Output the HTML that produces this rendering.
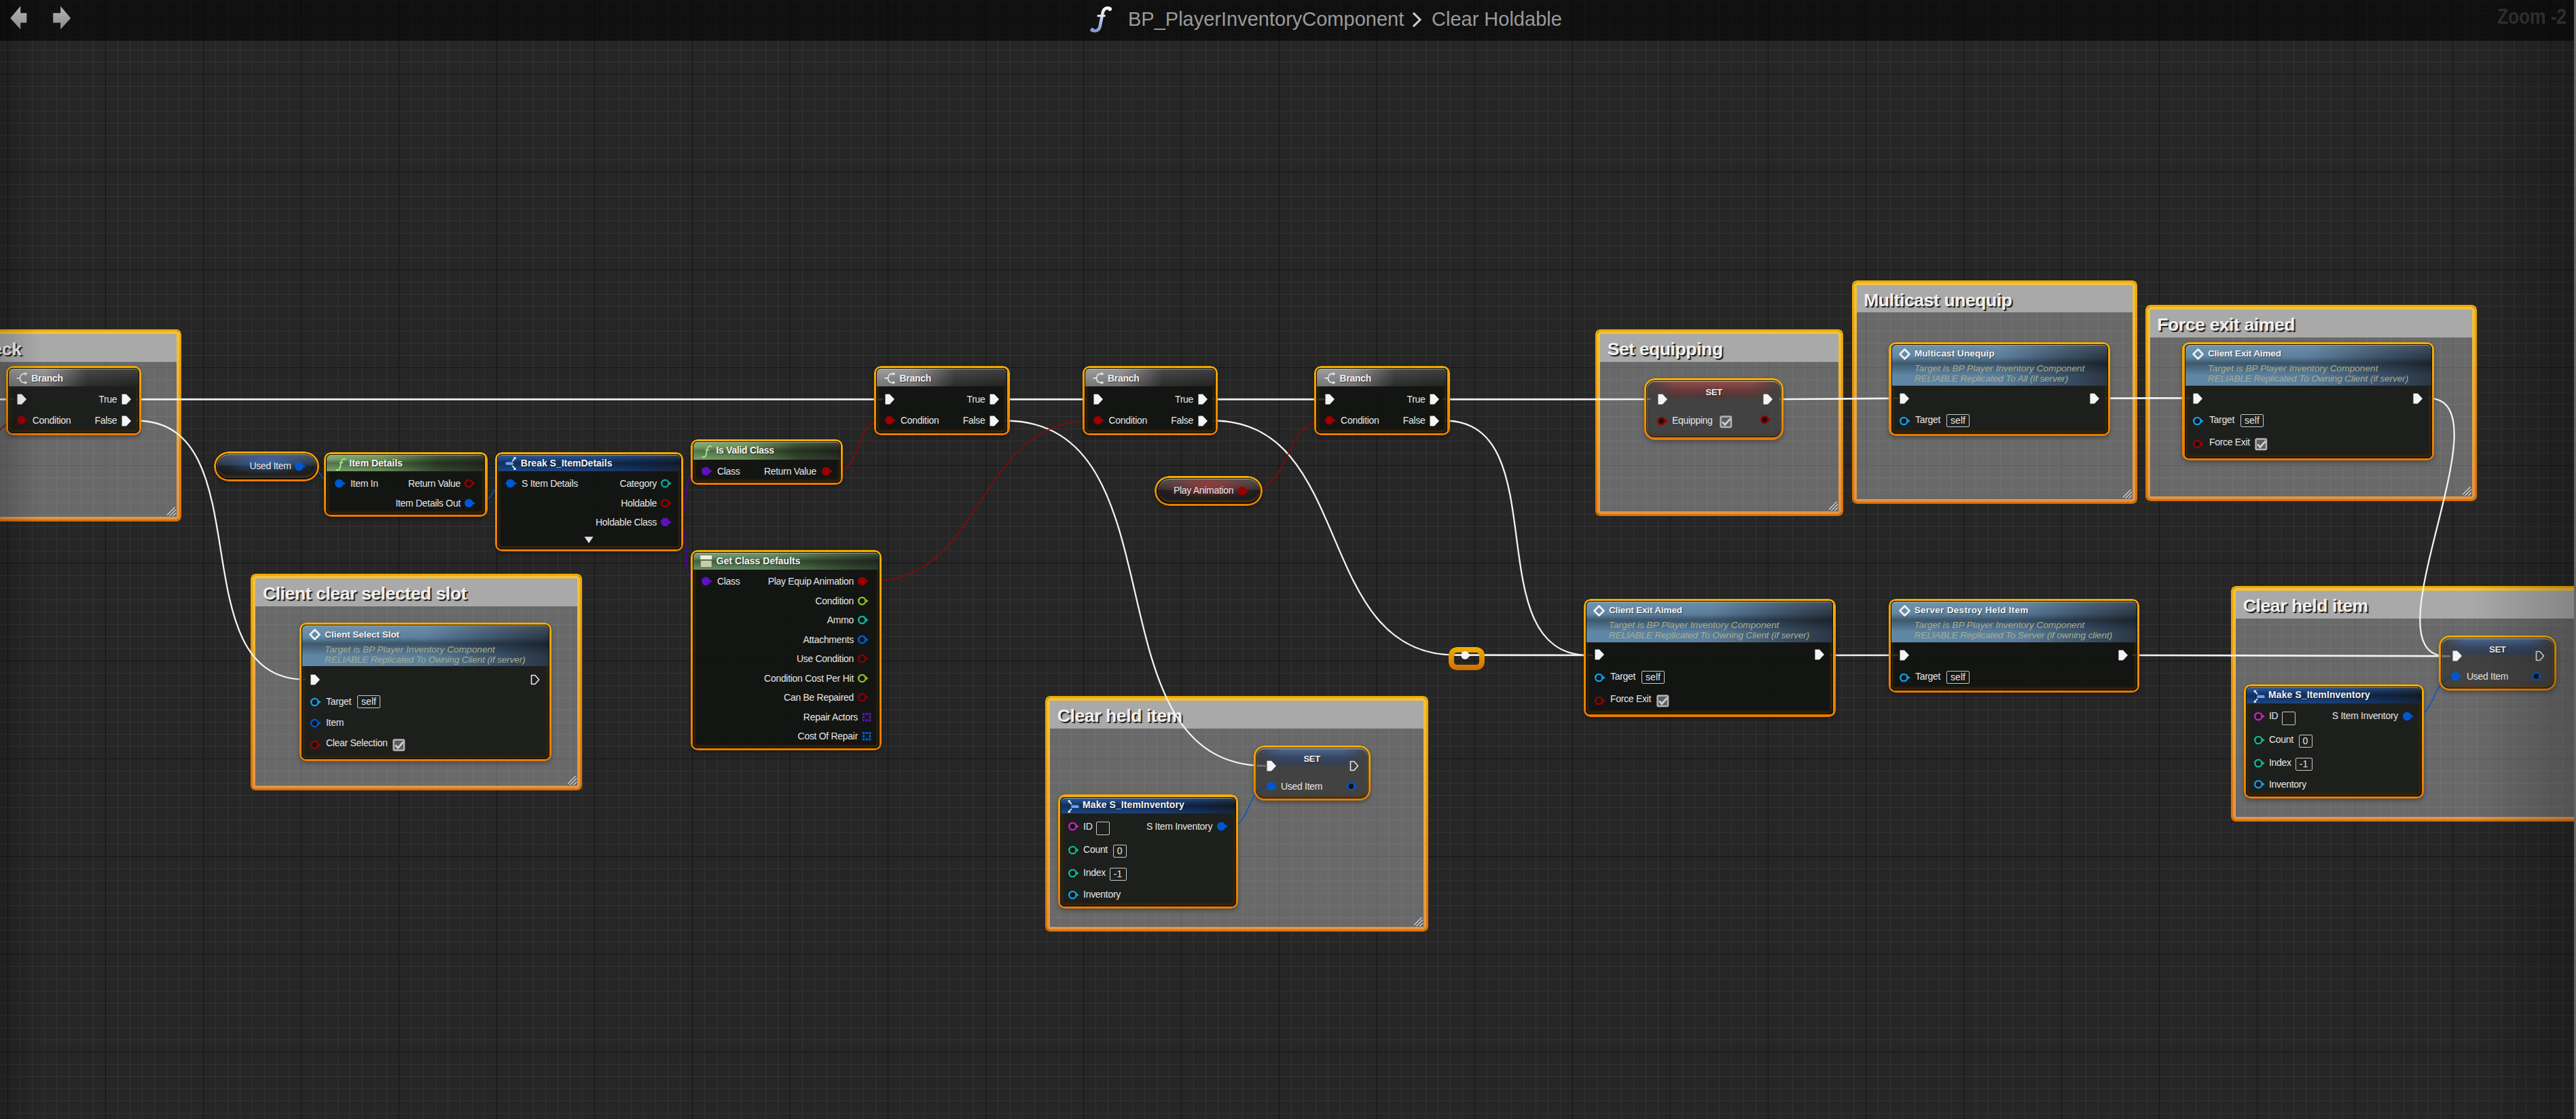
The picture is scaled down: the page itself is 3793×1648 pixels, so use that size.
<!DOCTYPE html><html><head><meta charset="utf-8"><style>
html,body{margin:0;padding:0;width:3793px;height:1648px;overflow:hidden;background:#262626;font-family:"Liberation Sans",sans-serif;position:relative}
#g{position:absolute;left:0;top:0;width:3793px;height:1648px;
 background-image:linear-gradient(to right,#161616 1px,transparent 1px),linear-gradient(to bottom,#161616 1px,transparent 1px),linear-gradient(to right,#333 1px,transparent 1px),linear-gradient(to bottom,#333 1px,transparent 1px);
 background-size:144px 144px,144px 144px,18px 18px,18px 18px;
 background-position:11px 0,0 109px,11px 0,0 1px;}
.ab{position:absolute;overflow:visible}
.tx{position:absolute;white-space:pre;font-family:"Liberation Sans",sans-serif;letter-spacing:-0.3px}
.fic{font-family:"Liberation Serif",serif;font-style:italic;font-size:22px;line-height:22px;color:#8fe08f;font-weight:700}
#top{position:absolute;left:0;top:0;width:3793px;height:60px;background:rgba(0,0,0,0.58)}
.cm{position:absolute;box-sizing:border-box;}
.cm .fr2{position:absolute;inset:3px;border-radius:4px;padding:4px;background:linear-gradient(#f2c23c,#e09448);-webkit-mask:linear-gradient(#000 0 0) content-box,linear-gradient(#000 0 0);-webkit-mask-composite:xor;mask-composite:exclude}
.cm .fr{position:absolute;inset:0;border-radius:7px;padding:3.2px;background:linear-gradient(#f0aa00,#dc7000);-webkit-mask:linear-gradient(#000 0 0) content-box,linear-gradient(#000 0 0);-webkit-mask-composite:xor;mask-composite:exclude}
.cm .ct{position:absolute;left:7px;right:7px;top:7px;height:40.5px;background:#a9a9a9}
.cm .cb{position:absolute;left:7px;right:7px;top:47.5px;bottom:7px;background:rgba(255,255,255,0.31)}
.nd{position:absolute;box-sizing:border-box;border-radius:10px;box-shadow:0 3px 6px rgba(0,0,0,.3)}
.nd::before{content:'';position:absolute;inset:0;border-radius:10px;padding:3.2px;background:linear-gradient(#f5ae00,#e87a00);-webkit-mask:linear-gradient(#000 0 0) content-box,linear-gradient(#000 0 0);-webkit-mask-composite:xor;mask-composite:exclude}
.nd .bd{position:absolute;left:3.2px;right:3.2px;top:3.2px;bottom:3.2px;border-radius:7px;background:rgba(17,19,17,0.85);overflow:hidden;box-shadow:inset 0 0 0 1px rgba(0,0,0,.75), inset 0 0 0 4.5px rgba(62,42,8,.5), inset 0 -6px 3px rgba(50,32,4,.45)}
.nd .hd{position:absolute;left:1px;right:1px;top:1px;border-radius:6px 6px 0 0}
.nd .bd::after{content:'';position:absolute;left:1px;right:1px;top:1px;height:10px;border-radius:6px 6px 0 0;box-sizing:border-box;border-top:1.2px solid rgba(215,205,165,.55);pointer-events:none}
.setn .sbd::after{border-radius:12px 12px 0 0;height:14px}
.hbr{background:linear-gradient(rgba(255,255,255,.1),rgba(0,0,0,.2)),linear-gradient(to right,#949494 0%,#8c8c8c 28%,#5e5e5e 45%,#363636 60%,#2a2a2a 100%)}
.hfn{background:linear-gradient(rgba(255,255,255,.12),rgba(0,0,0,.0) 30%,rgba(0,0,0,.35) 45%,rgba(0,0,0,0) 75%),linear-gradient(to right,#6088a6 0%,#5a7e9c 50%,#3a5066 80%,#2a3644 100%)}
.hgr{background:linear-gradient(rgba(255,255,255,.12),rgba(0,0,0,0) 25%,rgba(0,0,0,.3) 50%,rgba(0,0,0,0) 100%),linear-gradient(to right,#7aa46a 0%,#6a9058 35%,#364a30 70%,#2a3228 100%)}
.hst{background:linear-gradient(rgba(255,255,255,.12),rgba(0,0,0,0) 25%,rgba(0,0,0,.35) 50%,rgba(0,0,0,0) 100%),linear-gradient(to right,#1c4888 0%,#1a4280 50%,#16325c 80%,#1a2838 100%)}
.hgcd{background:linear-gradient(rgba(255,255,255,.15),rgba(0,0,0,0) 25%,rgba(0,0,0,.35) 50%,rgba(0,0,0,0) 100%),linear-gradient(to right,#6a9468 0%,#5e865c 40%,#3c5438 75%,#2c3a2a 100%)}
.setn,.setn::before{border-radius:16px}
.setn .sbd{background:rgba(40,40,40,0.6);border-radius:13px;box-shadow:inset 0 0 0 1px rgba(0,0,0,.8), inset 0 1px 0 1.5px rgba(200,190,150,.5), inset 0 -4px 4px rgba(90,55,0,.5)}
.hset{height:29px;border-radius:0!important;-webkit-mask:linear-gradient(to right,transparent,#000 22%,#000 78%,transparent);background:linear-gradient(rgba(90,140,210,.55),rgba(40,80,150,.45) 45%,rgba(30,60,110,.35) 75%,rgba(30,60,110,0)),linear-gradient(to right,rgba(0,0,0,0),rgba(0,0,0,0))}
.hsetr{height:29px;border-radius:0!important;-webkit-mask:linear-gradient(to right,transparent,#000 22%,#000 78%,transparent);background:linear-gradient(rgba(200,90,90,.6),rgba(150,50,50,.5) 45%,rgba(110,40,40,.35) 75%,rgba(110,40,40,0))}
.var{position:absolute;box-sizing:border-box;border-radius:22px;box-shadow:0 3px 6px rgba(0,0,0,.3)}
.var::before{content:'';position:absolute;inset:0;border-radius:22px;padding:3.2px;background:linear-gradient(#f5ae00,#e87a00);-webkit-mask:linear-gradient(#000 0 0) content-box,linear-gradient(#000 0 0);-webkit-mask-composite:xor;mask-composite:exclude}
.var .vi{position:absolute;left:3.2px;right:3.2px;top:3.2px;bottom:3.2px;border-radius:19px;background:#0a0a0a}
.var .vb{position:absolute;left:4.4px;right:4.4px;top:4.4px;bottom:4.4px;border-radius:18px;box-shadow:inset 0 1px 0 rgba(210,195,150,.8), inset 0 -3px 3px rgba(120,70,0,.5)}
.vblue .vb{background:radial-gradient(ellipse 60% 65% at 50% 30%,rgba(60,110,190,.8),rgba(60,110,190,.08) 80%,rgba(60,110,190,0) 100%),linear-gradient(#505560,#2a2e34 45%,#1a1c1c 50%,#1c1e1e)}
.vred .vb{background:radial-gradient(ellipse 60% 65% at 50% 30%,rgba(170,60,60,.8),rgba(170,60,60,.05) 80%,rgba(170,60,60,0) 100%),linear-gradient(#555,#2e2e2e 45%,#1c1c1c 50%,#1c1e1c)}
.rr{position:absolute;box-sizing:border-box;border-radius:12px;padding:7.8px;background:linear-gradient(#f2b000,#d06c00);-webkit-mask:linear-gradient(#000 0 0) content-box,linear-gradient(#000 0 0);-webkit-mask-composite:xor;mask-composite:exclude}
.tb{position:absolute;box-sizing:border-box;border:1.5px solid #c8c8c8;border-radius:2px;color:#e6e6e6;font-size:14px;text-align:center;font-family:"Liberation Sans",sans-serif}
.cm .rz{position:absolute;right:8px;bottom:8px;width:13px;height:13px;background:linear-gradient(135deg,transparent 40%,#c8c8c8 40%,#c8c8c8 47%,transparent 47%,transparent 60%,#c8c8c8 60%,#c8c8c8 67%,transparent 67%,transparent 80%,#c8c8c8 80%,#c8c8c8 87%,transparent 87%)}

</style></head><body><div id="g"></div>
<div class="cm" style="left:-60.0px;top:485.0px;width:326.5px;height:283.0px"><div class="fr"></div><div class="fr2"></div><div class="ct"></div><div class="cb"></div><div class="rz"></div></div>
<div class="tx" style="left:31.5px;top:501.1px;font-size:26.5px;line-height:26.5px;font-weight:700;color:#f0f0f0;transform:translateX(-100%);letter-spacing:-0.4px;text-shadow:2px 2px 1px rgba(0,0,0,0.85);">Validity check</div>
<div class="cm" style="left:369.4px;top:845.0px;width:487.8px;height:318.5px"><div class="fr"></div><div class="fr2"></div><div class="ct"></div><div class="cb"></div><div class="rz"></div></div>
<div class="tx" style="left:386.9px;top:861.1px;font-size:26.5px;line-height:26.5px;font-weight:700;color:#f0f0f0;letter-spacing:-0.4px;text-shadow:2px 2px 1px rgba(0,0,0,0.85);">Client clear selected slot</div>
<div class="cm" style="left:1539.3px;top:1025.0px;width:563.5px;height:347.1px"><div class="fr"></div><div class="fr2"></div><div class="ct"></div><div class="cb"></div><div class="rz"></div></div>
<div class="tx" style="left:1556.8px;top:1041.1px;font-size:26.5px;line-height:26.5px;font-weight:700;color:#f0f0f0;letter-spacing:-0.4px;text-shadow:2px 2px 1px rgba(0,0,0,0.85);">Clear held item</div>
<div class="cm" style="left:2349.2px;top:485.3px;width:365.3px;height:274.4px"><div class="fr"></div><div class="fr2"></div><div class="ct"></div><div class="cb"></div><div class="rz"></div></div>
<div class="tx" style="left:2366.7px;top:501.4px;font-size:26.5px;line-height:26.5px;font-weight:700;color:#f0f0f0;letter-spacing:-0.4px;text-shadow:2px 2px 1px rgba(0,0,0,0.85);">Set equipping</div>
<div class="cm" style="left:2726.7px;top:412.9px;width:420.1px;height:329.6px"><div class="fr"></div><div class="fr2"></div><div class="ct"></div><div class="cb"></div><div class="rz"></div></div>
<div class="tx" style="left:2744.2px;top:429.0px;font-size:26.5px;line-height:26.5px;font-weight:700;color:#f0f0f0;letter-spacing:-0.4px;text-shadow:2px 2px 1px rgba(0,0,0,0.85);">Multicast unequip</div>
<div class="cm" style="left:3158.8px;top:449.2px;width:488.2px;height:289.1px"><div class="fr"></div><div class="fr2"></div><div class="ct"></div><div class="cb"></div><div class="rz"></div></div>
<div class="tx" style="left:3176.3px;top:465.3px;font-size:26.5px;line-height:26.5px;font-weight:700;color:#f0f0f0;letter-spacing:-0.4px;text-shadow:2px 2px 1px rgba(0,0,0,0.85);">Force exit aimed</div>
<div class="cm" style="left:3285.3px;top:863.1px;width:614.7px;height:347.0px"><div class="fr"></div><div class="fr2"></div><div class="ct"></div><div class="cb"></div><div class="rz"></div></div>
<div class="tx" style="left:3302.8px;top:879.2px;font-size:26.5px;line-height:26.5px;font-weight:700;color:#f0f0f0;letter-spacing:-0.4px;text-shadow:2px 2px 1px rgba(0,0,0,0.85);">Clear held item</div>
<svg class="ab" style="left:0;top:0" width="3793" height="1648" viewBox="0 0 3793 1648"><path d="M-10.0 588.2 C-1.0 588.2 11.0 588.2 20.0 588.2" stroke="#f2f2f2" stroke-width="2.7" fill="none"/><path d="M200.0 588.2 C500.0 588.2 1000.0 588.2 1300.0 588.2" stroke="#f2f2f2" stroke-width="2.7" fill="none"/><path d="M200.0 619.5 C389.4 619.5 260.6 1000.7 450.0 1000.7" stroke="#f2f2f2" stroke-width="2.3" fill="none"/><path d="M1480.0 588.2 C1516.0 588.2 1564.0 588.2 1600.0 588.2" stroke="#f2f2f2" stroke-width="2.7" fill="none"/><path d="M1479.0 619.5 C1747.0 619.5 1596.0 1128.0 1864.0 1128.0" stroke="#f2f2f2" stroke-width="2.3" fill="none"/><path d="M1785.0 588.2 C1834.5 588.2 1900.5 588.2 1950.0 588.2" stroke="#f2f2f2" stroke-width="2.7" fill="none"/><path d="M1785.5 619.5 C1996.3 619.5 1932.2 964.7 2143.0 964.7" stroke="#f2f2f2" stroke-width="2.3" fill="none"/><path d="M2125.0 588.2 C2216.6 588.2 2338.4 588.0 2430.0 588.0" stroke="#f2f2f2" stroke-width="2.7" fill="none"/><path d="M2127.0 619.5 C2294.2 619.5 2171.8 965.0 2339.0 965.0" stroke="#f2f2f2" stroke-width="2.3" fill="none"/><path d="M2620.0 588.0 C2672.9 588.0 2742.1 586.6 2795.0 586.6" stroke="#f2f2f2" stroke-width="2.7" fill="none"/><path d="M3100.0 586.6 C3137.6 586.6 3187.4 586.3 3225.0 586.3" stroke="#f2f2f2" stroke-width="2.7" fill="none"/><path d="M3575.0 586.3 C3697.1 586.3 3479.9 966.3 3602.0 966.3" stroke="#f2f2f2" stroke-width="2.3" fill="none"/><path d="M2143.0 964.7 C2203.7 964.7 2284.3 965.0 2345.0 965.0" stroke="#f2f2f2" stroke-width="2.7" fill="none"/><path d="M2695.0 965.0 C2725.0 965.0 2765.0 965.0 2795.0 965.0" stroke="#f2f2f2" stroke-width="2.7" fill="none"/><path d="M3140.0 965.0 C3280.8 965.0 3467.2 966.3 3608.0 966.3" stroke="#f2f2f2" stroke-width="2.7" fill="none"/><path d="M-40.0 660.0 C-7.4 660.0 -4.6 619.5 28.0 619.5" stroke="#920606" stroke-width="1.5" fill="none"/><path d="M455.0 687.0 C473.1 687.0 471.9 712.4 490.0 712.4" stroke="#0058d0" stroke-width="1.5" fill="none"/><path d="M705.0 741.0 C725.6 741.0 724.4 712.4 745.0 712.4" stroke="#0058d0" stroke-width="1.5" fill="none"/><path d="M990.0 769.3 C1024.5 769.3 995.5 694.4 1030.0 694.4" stroke="#5a00b8" stroke-width="1.5" fill="none"/><path d="M990.0 769.3 C1028.1 769.3 991.9 856.4 1030.0 856.4" stroke="#5a00b8" stroke-width="1.5" fill="none"/><path d="M1228.0 694.4 C1272.1 694.4 1255.9 619.5 1300.0 619.5" stroke="#920606" stroke-width="1.5" fill="none"/><path d="M1282.0 856.4 C1450.3 856.4 1437.7 619.5 1606.0 619.5" stroke="#920606" stroke-width="1.5" fill="none"/><path d="M1839.0 722.7 C1903.9 722.7 1887.1 619.5 1952.0 619.5" stroke="#920606" stroke-width="1.5" fill="none"/><path d="M1808.0 1217.3 C1844.4 1217.3 1833.6 1158.1 1870.0 1158.1" stroke="#0058d0" stroke-width="1.5" fill="none"/><path d="M3552.0 1055.6 C3589.0 1055.6 3579.0 996.2 3616.0 996.2" stroke="#0058d0" stroke-width="1.5" fill="none"/></svg>
<div class="nd " style="left:8.8px;top:539.1px;width:199.5px;height:102.3px"><div class="bd"><div class="hd hbr" style="height:25.3px"></div></div></div>
<svg class="ab" style="left:23.8px;top:547.7px" width="17" height="18" viewBox="0 0 17 18"><path d="M14 2.5 Q6 1.5 5.5 9 Q6 16.5 14 15.5" fill="none" stroke="#e8e8e8" stroke-width="1.8"/><path d="M0.5 9 L5.5 9" stroke="#e8e8e8" stroke-width="1.8"/><path d="M12.5 0 L16.5 2.5 L12.5 5Z M12.5 13 L16.5 15.5 L12.5 18Z" fill="#e8e8e8"/></svg>
<div class="tx" style="left:46.3px;top:549.5px;font-size:14px;line-height:14px;font-weight:700;text-shadow:1px 1px 1px rgba(0,0,0,.55);color:#f2f2f2;">Branch</div>
<svg class="ab" style="left:24.8px;top:580.1px" width="15" height="16" viewBox="0 0 15 16"><path d="M1 0.5 L7 0.5 L14 8 L7 15.5 L1 15.5 Q0.5 15.5 0.5 15 L0.5 1 Q0.5 0.5 1 0.5Z" fill="#f4f4f4"/></svg>
<svg class="ab" style="left:178.8px;top:580.1px" width="15" height="16" viewBox="0 0 15 16"><path d="M1 0.5 L7 0.5 L14 8 L7 15.5 L1 15.5 Q0.5 15.5 0.5 15 L0.5 1 Q0.5 0.5 1 0.5Z" fill="#f4f4f4"/></svg>
<svg class="ab" style="left:178.8px;top:611.5px" width="15" height="16" viewBox="0 0 15 16"><path d="M1 0.5 L7 0.5 L14 8 L7 15.5 L1 15.5 Q0.5 15.5 0.5 15 L0.5 1 Q0.5 0.5 1 0.5Z" fill="#f4f4f4"/></svg>
<svg class="ab" style="left:24.8px;top:611.6px" width="18" height="14" viewBox="0 0 18 14"><circle cx="6.3" cy="7" r="6.2" fill="#9a0000"/><path d="M12.2 4.5 L16 7 L12.2 9.5Z" fill="#9a0000"/></svg>
<div class="tx" style="left:47.8px;top:611.8px;font-size:14px;line-height:14px;color:#e6e6e6;">Condition</div>
<div class="tx" style="left:172.3px;top:580.8px;font-size:14px;line-height:14px;color:#e6e6e6;transform:translateX(-100%);">True</div>
<div class="tx" style="left:172.3px;top:611.8px;font-size:14px;line-height:14px;color:#e6e6e6;transform:translateX(-100%);">False</div>
<div class="nd " style="left:1287.0px;top:539.1px;width:199.5px;height:102.3px"><div class="bd"><div class="hd hbr" style="height:25.3px"></div></div></div>
<svg class="ab" style="left:1302.0px;top:547.7px" width="17" height="18" viewBox="0 0 17 18"><path d="M14 2.5 Q6 1.5 5.5 9 Q6 16.5 14 15.5" fill="none" stroke="#e8e8e8" stroke-width="1.8"/><path d="M0.5 9 L5.5 9" stroke="#e8e8e8" stroke-width="1.8"/><path d="M12.5 0 L16.5 2.5 L12.5 5Z M12.5 13 L16.5 15.5 L12.5 18Z" fill="#e8e8e8"/></svg>
<div class="tx" style="left:1324.5px;top:549.5px;font-size:14px;line-height:14px;font-weight:700;text-shadow:1px 1px 1px rgba(0,0,0,.55);color:#f2f2f2;">Branch</div>
<svg class="ab" style="left:1303.0px;top:580.1px" width="15" height="16" viewBox="0 0 15 16"><path d="M1 0.5 L7 0.5 L14 8 L7 15.5 L1 15.5 Q0.5 15.5 0.5 15 L0.5 1 Q0.5 0.5 1 0.5Z" fill="#f4f4f4"/></svg>
<svg class="ab" style="left:1457.0px;top:580.1px" width="15" height="16" viewBox="0 0 15 16"><path d="M1 0.5 L7 0.5 L14 8 L7 15.5 L1 15.5 Q0.5 15.5 0.5 15 L0.5 1 Q0.5 0.5 1 0.5Z" fill="#f4f4f4"/></svg>
<svg class="ab" style="left:1457.0px;top:611.5px" width="15" height="16" viewBox="0 0 15 16"><path d="M1 0.5 L7 0.5 L14 8 L7 15.5 L1 15.5 Q0.5 15.5 0.5 15 L0.5 1 Q0.5 0.5 1 0.5Z" fill="#f4f4f4"/></svg>
<svg class="ab" style="left:1303.0px;top:611.6px" width="18" height="14" viewBox="0 0 18 14"><circle cx="6.3" cy="7" r="6.2" fill="#9a0000"/><path d="M12.2 4.5 L16 7 L12.2 9.5Z" fill="#9a0000"/></svg>
<div class="tx" style="left:1326.0px;top:611.8px;font-size:14px;line-height:14px;color:#e6e6e6;">Condition</div>
<div class="tx" style="left:1450.5px;top:580.8px;font-size:14px;line-height:14px;color:#e6e6e6;transform:translateX(-100%);">True</div>
<div class="tx" style="left:1450.5px;top:611.8px;font-size:14px;line-height:14px;color:#e6e6e6;transform:translateX(-100%);">False</div>
<div class="nd " style="left:1593.5px;top:539.1px;width:199.5px;height:102.3px"><div class="bd"><div class="hd hbr" style="height:25.3px"></div></div></div>
<svg class="ab" style="left:1608.5px;top:547.7px" width="17" height="18" viewBox="0 0 17 18"><path d="M14 2.5 Q6 1.5 5.5 9 Q6 16.5 14 15.5" fill="none" stroke="#e8e8e8" stroke-width="1.8"/><path d="M0.5 9 L5.5 9" stroke="#e8e8e8" stroke-width="1.8"/><path d="M12.5 0 L16.5 2.5 L12.5 5Z M12.5 13 L16.5 15.5 L12.5 18Z" fill="#e8e8e8"/></svg>
<div class="tx" style="left:1631.0px;top:549.5px;font-size:14px;line-height:14px;font-weight:700;text-shadow:1px 1px 1px rgba(0,0,0,.55);color:#f2f2f2;">Branch</div>
<svg class="ab" style="left:1609.5px;top:580.1px" width="15" height="16" viewBox="0 0 15 16"><path d="M1 0.5 L7 0.5 L14 8 L7 15.5 L1 15.5 Q0.5 15.5 0.5 15 L0.5 1 Q0.5 0.5 1 0.5Z" fill="#f4f4f4"/></svg>
<svg class="ab" style="left:1763.5px;top:580.1px" width="15" height="16" viewBox="0 0 15 16"><path d="M1 0.5 L7 0.5 L14 8 L7 15.5 L1 15.5 Q0.5 15.5 0.5 15 L0.5 1 Q0.5 0.5 1 0.5Z" fill="#f4f4f4"/></svg>
<svg class="ab" style="left:1763.5px;top:611.5px" width="15" height="16" viewBox="0 0 15 16"><path d="M1 0.5 L7 0.5 L14 8 L7 15.5 L1 15.5 Q0.5 15.5 0.5 15 L0.5 1 Q0.5 0.5 1 0.5Z" fill="#f4f4f4"/></svg>
<svg class="ab" style="left:1609.5px;top:611.6px" width="18" height="14" viewBox="0 0 18 14"><circle cx="6.3" cy="7" r="6.2" fill="#9a0000"/><path d="M12.2 4.5 L16 7 L12.2 9.5Z" fill="#9a0000"/></svg>
<div class="tx" style="left:1632.5px;top:611.8px;font-size:14px;line-height:14px;color:#e6e6e6;">Condition</div>
<div class="tx" style="left:1757.0px;top:580.8px;font-size:14px;line-height:14px;color:#e6e6e6;transform:translateX(-100%);">True</div>
<div class="tx" style="left:1757.0px;top:611.8px;font-size:14px;line-height:14px;color:#e6e6e6;transform:translateX(-100%);">False</div>
<div class="nd " style="left:1935.1px;top:539.1px;width:199.5px;height:102.3px"><div class="bd"><div class="hd hbr" style="height:25.3px"></div></div></div>
<svg class="ab" style="left:1950.1px;top:547.7px" width="17" height="18" viewBox="0 0 17 18"><path d="M14 2.5 Q6 1.5 5.5 9 Q6 16.5 14 15.5" fill="none" stroke="#e8e8e8" stroke-width="1.8"/><path d="M0.5 9 L5.5 9" stroke="#e8e8e8" stroke-width="1.8"/><path d="M12.5 0 L16.5 2.5 L12.5 5Z M12.5 13 L16.5 15.5 L12.5 18Z" fill="#e8e8e8"/></svg>
<div class="tx" style="left:1972.6px;top:549.5px;font-size:14px;line-height:14px;font-weight:700;text-shadow:1px 1px 1px rgba(0,0,0,.55);color:#f2f2f2;">Branch</div>
<svg class="ab" style="left:1951.1px;top:580.1px" width="15" height="16" viewBox="0 0 15 16"><path d="M1 0.5 L7 0.5 L14 8 L7 15.5 L1 15.5 Q0.5 15.5 0.5 15 L0.5 1 Q0.5 0.5 1 0.5Z" fill="#f4f4f4"/></svg>
<svg class="ab" style="left:2105.1px;top:580.1px" width="15" height="16" viewBox="0 0 15 16"><path d="M1 0.5 L7 0.5 L14 8 L7 15.5 L1 15.5 Q0.5 15.5 0.5 15 L0.5 1 Q0.5 0.5 1 0.5Z" fill="#f4f4f4"/></svg>
<svg class="ab" style="left:2105.1px;top:611.5px" width="15" height="16" viewBox="0 0 15 16"><path d="M1 0.5 L7 0.5 L14 8 L7 15.5 L1 15.5 Q0.5 15.5 0.5 15 L0.5 1 Q0.5 0.5 1 0.5Z" fill="#f4f4f4"/></svg>
<svg class="ab" style="left:1951.1px;top:611.6px" width="18" height="14" viewBox="0 0 18 14"><circle cx="6.3" cy="7" r="6.2" fill="#9a0000"/><path d="M12.2 4.5 L16 7 L12.2 9.5Z" fill="#9a0000"/></svg>
<div class="tx" style="left:1974.1px;top:611.8px;font-size:14px;line-height:14px;color:#e6e6e6;">Condition</div>
<div class="tx" style="left:2098.6px;top:580.8px;font-size:14px;line-height:14px;color:#e6e6e6;transform:translateX(-100%);">True</div>
<div class="tx" style="left:2098.6px;top:611.8px;font-size:14px;line-height:14px;color:#e6e6e6;transform:translateX(-100%);">False</div>
<div class="var vblue" style="left:314.8px;top:665.1px;width:155.2px;height:43.7px"><div class="vi"></div><div class="vb"></div></div>
<div class="tx" style="left:428.5px;top:679.1px;font-size:14px;line-height:14px;color:#e6e6e6;transform:translateX(-100%);">Used Item</div>
<svg class="ab" style="left:433.6px;top:679.8px" width="18" height="14" viewBox="0 0 18 14"><circle cx="6.3" cy="7" r="6.2" fill="#0058d0"/><path d="M12.2 4.5 L16 7 L12.2 9.5Z" fill="#0058d0"/></svg>
<div class="nd " style="left:477.0px;top:665.7px;width:240.6px;height:95.6px"><div class="bd"><div class="hd hgr" style="height:24.4px"></div></div></div>
<svg class="ab" style="left:493.5px;top:674.5px" width="15.6" height="18.0" viewBox="15 9.5 32 37.5"><path d="M44.5 12.3 C39 10.2 33.8 12.5 32.3 20 L28.6 38.5 C27.6 44 23.5 46.5 17.3 44.8" stroke="#9ae89a" stroke-width="4" fill="none" stroke-linecap="round"/><path d="M26.2 23.2 L38.2 23.2" stroke="#9ae89a" stroke-width="3"/></svg>
<div class="tx" style="left:514.3px;top:674.6px;font-size:14px;line-height:14px;font-weight:700;text-shadow:1px 1px 1px rgba(0,0,0,.55);color:#f4f4f4;letter-spacing:0">Item Details</div>
<svg class="ab" style="left:492.5px;top:705.4px" width="18" height="14" viewBox="0 0 18 14"><circle cx="6.3" cy="7" r="6.2" fill="#0058d0"/><path d="M12.2 4.5 L16 7 L12.2 9.5Z" fill="#0058d0"/></svg>
<div class="tx" style="left:516.0px;top:705.1px;font-size:14px;line-height:14px;color:#e6e6e6;">Item In</div>
<div class="tx" style="left:678.0px;top:705.1px;font-size:14px;line-height:14px;color:#e6e6e6;transform:translateX(-100%);">Return Value</div>
<svg class="ab" style="left:684.0px;top:705.4px" width="18" height="14" viewBox="0 0 18 14"><circle cx="6.3" cy="7" r="5.1" fill="#141414" stroke="#9a0000" stroke-width="2.4"/><path d="M12.2 4.3 L15.6 7 L12.2 9.7Z" fill="#9a0000"/></svg>
<svg class="ab" style="left:684.0px;top:734.0px" width="18" height="14" viewBox="0 0 18 14"><circle cx="6.3" cy="7" r="6.2" fill="#0058d0"/><path d="M12.2 4.5 L16 7 L12.2 9.5Z" fill="#0058d0"/></svg>
<div class="tx" style="left:678.0px;top:734.1px;font-size:14px;line-height:14px;color:#e6e6e6;transform:translateX(-100%);">Item Details Out</div>
<div class="nd " style="left:729.1px;top:665.7px;width:276.6px;height:146.0px"><div class="bd"><div class="hd hst" style="height:24.4px"></div></div></div>
<svg class="ab" style="left:743px;top:673px" width="18" height="20" viewBox="0 0 18 20"><rect x="1.3" y="7.4" width="11.8" height="4.4" rx="2.2" fill="#6aa0f0"/><path d="M11.3 6.5 L15.5 1.2" stroke="#f0f0f0" stroke-width="1.8"/><path d="M12.6 0.3 L16.6 0.3 L16.4 4.3Z" fill="#f0f0f0"/><path d="M11.3 12.8 L15.5 18" stroke="#f0f0f0" stroke-width="1.8"/><path d="M12.6 18.9 L16.6 18.9 L16.4 14.9Z" fill="#f0f0f0"/></svg>
<div class="tx" style="left:766.8px;top:674.7px;font-size:14px;line-height:14px;font-weight:700;text-shadow:1px 1px 1px rgba(0,0,0,.55);color:#f4f4f4;letter-spacing:0">Break S_ItemDetails</div>
<svg class="ab" style="left:745.0px;top:705.4px" width="18" height="14" viewBox="0 0 18 14"><circle cx="6.3" cy="7" r="6.2" fill="#0058d0"/><path d="M12.2 4.5 L16 7 L12.2 9.5Z" fill="#0058d0"/></svg>
<div class="tx" style="left:768.0px;top:705.1px;font-size:14px;line-height:14px;color:#e6e6e6;">S Item Details</div>
<div class="tx" style="left:967.0px;top:705.1px;font-size:14px;line-height:14px;color:#e6e6e6;transform:translateX(-100%);">Category</div>
<svg class="ab" style="left:973.0px;top:705.4px" width="18" height="14" viewBox="0 0 18 14"><circle cx="6.3" cy="7" r="5.1" fill="#141414" stroke="#10a890" stroke-width="2.4"/><path d="M12.2 4.3 L15.6 7 L12.2 9.7Z" fill="#10a890"/></svg>
<div class="tx" style="left:967.0px;top:734.1px;font-size:14px;line-height:14px;color:#e6e6e6;transform:translateX(-100%);">Holdable</div>
<svg class="ab" style="left:973.0px;top:734.0px" width="18" height="14" viewBox="0 0 18 14"><circle cx="6.3" cy="7" r="5.1" fill="#141414" stroke="#9a0000" stroke-width="2.4"/><path d="M12.2 4.3 L15.6 7 L12.2 9.7Z" fill="#9a0000"/></svg>
<div class="tx" style="left:967.0px;top:762.1px;font-size:14px;line-height:14px;color:#e6e6e6;transform:translateX(-100%);">Holdable Class</div>
<svg class="ab" style="left:973.0px;top:762.3px" width="18" height="14" viewBox="0 0 18 14"><circle cx="6.3" cy="7" r="6.2" fill="#6010c0"/><path d="M12.2 4.5 L16 7 L12.2 9.5Z" fill="#6010c0"/></svg>
<svg class="ab" style="left:860px;top:790px" width="14" height="11" viewBox="0 0 14 11"><path d="M0.5 0.5 L13.5 0.5 L7 10Z" fill="#e0e0e0"/></svg>
<div class="nd " style="left:1016.6px;top:647.2px;width:224.7px;height:67.3px"><div class="bd"><div class="hd hgr" style="height:25.4px"></div></div></div>
<svg class="ab" style="left:1033.0px;top:656.0px" width="15.6" height="18.0" viewBox="15 9.5 32 37.5"><path d="M44.5 12.3 C39 10.2 33.8 12.5 32.3 20 L28.6 38.5 C27.6 44 23.5 46.5 17.3 44.8" stroke="#9ae89a" stroke-width="4" fill="none" stroke-linecap="round"/><path d="M26.2 23.2 L38.2 23.2" stroke="#9ae89a" stroke-width="3"/></svg>
<div class="tx" style="left:1054.5px;top:656.1px;font-size:14px;line-height:14px;font-weight:700;text-shadow:1px 1px 1px rgba(0,0,0,.55);color:#f4f4f4;">Is Valid Class</div>
<svg class="ab" style="left:1033.0px;top:687.4px" width="18" height="14" viewBox="0 0 18 14"><circle cx="6.3" cy="7" r="6.2" fill="#6010c0"/><path d="M12.2 4.5 L16 7 L12.2 9.5Z" fill="#6010c0"/></svg>
<div class="tx" style="left:1056.0px;top:687.1px;font-size:14px;line-height:14px;color:#e6e6e6;">Class</div>
<div class="tx" style="left:1202.0px;top:687.1px;font-size:14px;line-height:14px;color:#e6e6e6;transform:translateX(-100%);">Return Value</div>
<svg class="ab" style="left:1210.0px;top:687.4px" width="18" height="14" viewBox="0 0 18 14"><circle cx="6.3" cy="7" r="6.2" fill="#9a0000"/><path d="M12.2 4.5 L16 7 L12.2 9.5Z" fill="#9a0000"/></svg>
<div class="nd " style="left:1016.6px;top:809.6px;width:281.2px;height:295.6px"><div class="bd"><div class="hd hgcd" style="height:25.6px"></div></div></div>
<svg class="ab" style="left:1031px;top:818px" width="18" height="18" viewBox="0 0 18 18"><rect x="0.2" y="0" width="17" height="5.8" fill="#eef0e2"/><rect x="0.8" y="7.7" width="16" height="9.3" rx="0.8" fill="#cdc8ac"/></svg>
<div class="tx" style="left:1054.8px;top:818.7px;font-size:14px;line-height:14px;font-weight:700;text-shadow:1px 1px 1px rgba(0,0,0,.55);color:#f4f4f4;letter-spacing:0">Get Class Defaults</div>
<svg class="ab" style="left:1033.0px;top:849.4px" width="18" height="14" viewBox="0 0 18 14"><circle cx="6.3" cy="7" r="6.2" fill="#6010c0"/><path d="M12.2 4.5 L16 7 L12.2 9.5Z" fill="#6010c0"/></svg>
<div class="tx" style="left:1056.0px;top:849.1px;font-size:14px;line-height:14px;color:#e6e6e6;">Class</div>
<div class="tx" style="left:1257.0px;top:849.1px;font-size:14px;line-height:14px;color:#e6e6e6;transform:translateX(-100%);">Play Equip Animation</div>
<svg class="ab" style="left:1263.0px;top:849.4px" width="18" height="14" viewBox="0 0 18 14"><circle cx="6.3" cy="7" r="6.2" fill="#9a0000"/><path d="M12.2 4.5 L16 7 L12.2 9.5Z" fill="#9a0000"/></svg>
<div class="tx" style="left:1257.0px;top:878.1px;font-size:14px;line-height:14px;color:#e6e6e6;transform:translateX(-100%);">Condition</div>
<svg class="ab" style="left:1263.0px;top:878.4px" width="18" height="14" viewBox="0 0 18 14"><circle cx="6.3" cy="7" r="5.1" fill="#141414" stroke="#88c020" stroke-width="2.4"/><path d="M12.2 4.3 L15.6 7 L12.2 9.7Z" fill="#88c020"/></svg>
<div class="tx" style="left:1257.0px;top:906.1px;font-size:14px;line-height:14px;color:#e6e6e6;transform:translateX(-100%);">Ammo</div>
<svg class="ab" style="left:1263.0px;top:906.4px" width="18" height="14" viewBox="0 0 18 14"><circle cx="6.3" cy="7" r="5.1" fill="#141414" stroke="#10b8a0" stroke-width="2.4"/><path d="M12.2 4.3 L15.6 7 L12.2 9.7Z" fill="#10b8a0"/></svg>
<div class="tx" style="left:1257.0px;top:935.0px;font-size:14px;line-height:14px;color:#e6e6e6;transform:translateX(-100%);">Attachments</div>
<svg class="ab" style="left:1263.0px;top:935.3px" width="18" height="14" viewBox="0 0 18 14"><circle cx="6.3" cy="7" r="5.1" fill="#141414" stroke="#0060d8" stroke-width="2.4"/><path d="M12.2 4.3 L15.6 7 L12.2 9.7Z" fill="#0060d8"/></svg>
<div class="tx" style="left:1257.0px;top:963.0px;font-size:14px;line-height:14px;color:#e6e6e6;transform:translateX(-100%);">Use Condition</div>
<svg class="ab" style="left:1263.0px;top:963.3px" width="18" height="14" viewBox="0 0 18 14"><circle cx="6.3" cy="7" r="5.1" fill="#141414" stroke="#8a0000" stroke-width="2.4"/><path d="M12.2 4.3 L15.6 7 L12.2 9.7Z" fill="#8a0000"/></svg>
<div class="tx" style="left:1257.0px;top:991.9px;font-size:14px;line-height:14px;color:#e6e6e6;transform:translateX(-100%);">Condition Cost Per Hit</div>
<svg class="ab" style="left:1263.0px;top:992.2px" width="18" height="14" viewBox="0 0 18 14"><circle cx="6.3" cy="7" r="5.1" fill="#141414" stroke="#88c020" stroke-width="2.4"/><path d="M12.2 4.3 L15.6 7 L12.2 9.7Z" fill="#88c020"/></svg>
<div class="tx" style="left:1257.0px;top:1020.0px;font-size:14px;line-height:14px;color:#e6e6e6;transform:translateX(-100%);">Can Be Repaired</div>
<svg class="ab" style="left:1263.0px;top:1020.3px" width="18" height="14" viewBox="0 0 18 14"><circle cx="6.3" cy="7" r="5.1" fill="#141414" stroke="#8a0000" stroke-width="2.4"/><path d="M12.2 4.3 L15.6 7 L12.2 9.7Z" fill="#8a0000"/></svg>
<div class="tx" style="left:1263.0px;top:1048.9px;font-size:14px;line-height:14px;color:#e6e6e6;transform:translateX(-100%);">Repair Actors</div>
<svg class="ab" style="left:1270.0px;top:1049.7px" width="14" height="14" viewBox="0 0 14 14"><rect x="0.0" y="0.0" width="3.2" height="3.2" fill="#6010c0"/><rect x="0.0" y="4.6" width="3.2" height="3.2" fill="#6010c0"/><rect x="0.0" y="9.2" width="3.2" height="3.2" fill="#6010c0"/><rect x="4.6" y="0.0" width="3.2" height="3.2" fill="#6010c0"/><rect x="4.6" y="9.2" width="3.2" height="3.2" fill="#6010c0"/><rect x="9.2" y="0.0" width="3.2" height="3.2" fill="#6010c0"/><rect x="9.2" y="4.6" width="3.2" height="3.2" fill="#6010c0"/><rect x="9.2" y="9.2" width="3.2" height="3.2" fill="#6010c0"/></svg>
<div class="tx" style="left:1263.0px;top:1076.9px;font-size:14px;line-height:14px;color:#e6e6e6;transform:translateX(-100%);">Cost Of Repair</div>
<svg class="ab" style="left:1270.0px;top:1077.7px" width="14" height="14" viewBox="0 0 14 14"><rect x="0.0" y="0.0" width="3.2" height="3.2" fill="#0060d8"/><rect x="0.0" y="4.6" width="3.2" height="3.2" fill="#0060d8"/><rect x="0.0" y="9.2" width="3.2" height="3.2" fill="#0060d8"/><rect x="4.6" y="0.0" width="3.2" height="3.2" fill="#0060d8"/><rect x="4.6" y="9.2" width="3.2" height="3.2" fill="#0060d8"/><rect x="9.2" y="0.0" width="3.2" height="3.2" fill="#0060d8"/><rect x="9.2" y="4.6" width="3.2" height="3.2" fill="#0060d8"/><rect x="9.2" y="9.2" width="3.2" height="3.2" fill="#0060d8"/></svg>
<div class="nd " style="left:440.8px;top:917.1px;width:371.0px;height:203.7px"><div class="bd"><div class="hd hfn" style="height:60.2px"></div></div></div>
<svg class="ab" style="left:455.3px;top:926.3px" width="17" height="17" viewBox="0 0 17 17"><path d="M8.5 1.5 L15.5 8.5 L8.5 15.5 L1.5 8.5Z" fill="none" stroke="#f0f0f0" stroke-width="2.7" stroke-linejoin="round"/></svg>
<div class="tx" style="left:478.3px;top:927.6px;font-size:13.6px;line-height:13.6px;font-weight:700;text-shadow:1px 1px 1px rgba(0,0,0,.55);color:#f4f4f4;letter-spacing:-0.07px">Client Select Slot</div>
<div class="tx" style="left:478.1px;top:949.5px;font-size:13.7px;line-height:13.7px;font-style:italic;color:#a9ad8e;letter-spacing:0">Target is BP Player Inventory Component</div>
<div class="tx" style="left:478.1px;top:964.5px;font-size:13.7px;line-height:13.7px;font-style:italic;color:#a9ad8e;letter-spacing:-0.16px">RELIABLE Replicated To Owning Client (if server)</div>
<svg class="ab" style="left:456.5px;top:992.7px" width="15" height="16" viewBox="0 0 15 16"><path d="M1 0.5 L7 0.5 L14 8 L7 15.5 L1 15.5 Q0.5 15.5 0.5 15 L0.5 1 Q0.5 0.5 1 0.5Z" fill="#f4f4f4"/></svg>
<svg class="ab" style="left:781.0px;top:992.7px" width="15" height="16" viewBox="0 0 15 16"><path d="M1.5 1.5 L6.8 1.5 L12.6 8 L6.8 14.5 L1.5 14.5Z" fill="none" stroke="#e8e8e8" stroke-width="1.6" stroke-linejoin="round"/></svg>
<svg class="ab" style="left:457.0px;top:1026.8px" width="18" height="14" viewBox="0 0 18 14"><circle cx="6.3" cy="7" r="5.1" fill="#141414" stroke="#10a0e8" stroke-width="2.4"/><path d="M12.2 4.3 L15.6 7 L12.2 9.7Z" fill="#10a0e8"/></svg>
<div class="tx" style="left:480.0px;top:1025.6px;font-size:14px;line-height:14px;color:#e6e6e6;">Target</div>
<div class="tb" style="left:526.0px;top:1023.7px;width:34px;height:19px;line-height:17px">self</div>
<svg class="ab" style="left:457.0px;top:1057.9px" width="18" height="14" viewBox="0 0 18 14"><circle cx="6.3" cy="7" r="5.1" fill="#141414" stroke="#0058d0" stroke-width="2.4"/><path d="M12.2 4.3 L15.6 7 L12.2 9.7Z" fill="#0058d0"/></svg>
<div class="tx" style="left:480.0px;top:1056.6px;font-size:14px;line-height:14px;color:#e6e6e6;">Item</div>
<svg class="ab" style="left:457.0px;top:1089.5px" width="18" height="14" viewBox="0 0 18 14"><circle cx="6.3" cy="7" r="5.1" fill="#141414" stroke="#9a0000" stroke-width="2.4"/><path d="M12.2 4.3 L15.6 7 L12.2 9.7Z" fill="#9a0000"/></svg>
<div class="tx" style="left:480.0px;top:1086.6px;font-size:14px;line-height:14px;color:#e6e6e6;">Clear Selection</div>
<svg class="ab" style="left:578.0px;top:1087.7px" width="18.6" height="18.6" viewBox="0 0 17 17"><rect x="0.3" y="0.3" width="16.4" height="16.4" rx="2.5" fill="#b4b4b4"/><rect x="2.6" y="2.6" width="11.8" height="11.8" rx="0.5" fill="#5c5c5c"/><path d="M3.8 8.6 L7.2 12.4 L14.5 4.2" stroke="#cfcfcf" stroke-width="2.6" fill="none"/></svg>
<div class="var vred" style="left:1700.3px;top:701.1px;width:158.7px;height:43.7px"><div class="vi"></div><div class="vb"></div></div>
<div class="tx" style="left:1816.3px;top:715.1px;font-size:14px;line-height:14px;color:#e6e6e6;transform:translateX(-100%);">Play Animation</div>
<svg class="ab" style="left:1822.7px;top:715.7px" width="18" height="14" viewBox="0 0 18 14"><circle cx="6.3" cy="7" r="6.2" fill="#9a0000"/><path d="M12.2 4.5 L16 7 L12.2 9.5Z" fill="#9a0000"/></svg>
<div class="rr" style="left:2132.6px;top:952.9px;width:53.6px;height:33.7px"></div>
<svg class="ab" style="left:2150.8px;top:957.7px" width="17" height="14" viewBox="0 0 17 14"><circle cx="6.2" cy="7" r="5.9" fill="#f4f4f4"/><path d="M11.5 4.6 L15.8 7 L11.5 9.4Z" fill="#f4f4f4"/></svg>
<div class="nd setn" style="left:1845.8px;top:1097.6px;width:172.0px;height:81.7px"><div class="bd sbd"><div class="hd hset" style="left:0;right:0"></div></div></div>
<div class="tx" style="left:1931.7px;top:1110.8px;font-size:13px;line-height:13px;font-weight:700;text-shadow:1px 1px 1px rgba(0,0,0,.55);color:#f0f0f0;transform:translateX(-50%);">SET</div>
<svg class="ab" style="left:1865.0px;top:1120.0px" width="15" height="16" viewBox="0 0 15 16"><path d="M1 0.5 L7 0.5 L14 8 L7 15.5 L1 15.5 Q0.5 15.5 0.5 15 L0.5 1 Q0.5 0.5 1 0.5Z" fill="#f4f4f4"/></svg>
<svg class="ab" style="left:1987.0px;top:1120.0px" width="15" height="16" viewBox="0 0 15 16"><path d="M1.5 1.5 L6.8 1.5 L12.6 8 L6.8 14.5 L1.5 14.5Z" fill="none" stroke="#e8e8e8" stroke-width="1.6" stroke-linejoin="round"/></svg>
<svg class="ab" style="left:1865.0px;top:1151.1px" width="18" height="14" viewBox="0 0 18 14"><circle cx="6.3" cy="7" r="6.2" fill="#0058d0"/><path d="M12.2 4.5 L16 7 L12.2 9.5Z" fill="#0058d0"/></svg>
<div class="tx" style="left:1886.0px;top:1151.1px;font-size:14px;line-height:14px;color:#e6e6e6;">Used Item</div>
<svg class="ab" style="left:1983.0px;top:1151.1px" width="18" height="14" viewBox="0 0 18 14"><circle cx="6.3" cy="7" r="5.1" fill="#141414" stroke="#0058d0" stroke-width="2.4"/><path d="M12.2 4.3 L15.6 7 L12.2 9.7Z" fill="#0058d0"/></svg>
<div class="nd " style="left:1558.1px;top:1170.4px;width:264.7px;height:168.0px"><div class="bd"><div class="hd hst" style="height:23.9px"></div></div></div>
<svg class="ab" style="left:1571.6px;top:1177.9px" width="18" height="20" viewBox="0 0 18 20"><rect x="5" y="7.7" width="11.8" height="4.4" rx="2.2" fill="#6aa0f0"/><path d="M6 6.5 L2 1.8" stroke="#f0f0f0" stroke-width="1.8"/><path d="M0.6 0.4 L4.6 0.6 L1 4.2Z" fill="#f0f0f0"/><path d="M6 13 L2 17.5" stroke="#f0f0f0" stroke-width="1.8"/><path d="M0.6 19 L4.6 18.8 L1 15.2Z" fill="#f0f0f0"/></svg>
<div class="tx" style="left:1594.1px;top:1178.0px;font-size:14px;line-height:14px;font-weight:700;text-shadow:1px 1px 1px rgba(0,0,0,.55);color:#f4f4f4;letter-spacing:0.1px">Make S_ItemInventory</div>
<svg class="ab" style="left:1573.1px;top:1210.3px" width="18" height="14" viewBox="0 0 18 14"><circle cx="6.3" cy="7" r="5.1" fill="#141414" stroke="#d020c0" stroke-width="2.4"/><path d="M12.2 4.3 L15.6 7 L12.2 9.7Z" fill="#d020c0"/></svg>
<div class="tx" style="left:1595.1px;top:1209.5px;font-size:14px;line-height:14px;color:#e6e6e6;">ID</div>
<div class="tb" style="left:1614.1px;top:1209.9px;width:20px;height:20px"></div>
<div class="tx" style="left:1785.1px;top:1209.5px;font-size:14px;line-height:14px;color:#e6e6e6;transform:translateX(-100%);">S Item Inventory</div>
<svg class="ab" style="left:1792.1px;top:1210.3px" width="18" height="14" viewBox="0 0 18 14"><circle cx="6.3" cy="7" r="6.2" fill="#0058d0"/><path d="M12.2 4.5 L16 7 L12.2 9.5Z" fill="#0058d0"/></svg>
<svg class="ab" style="left:1573.1px;top:1245.0px" width="18" height="14" viewBox="0 0 18 14"><circle cx="6.3" cy="7" r="5.1" fill="#141414" stroke="#10b890" stroke-width="2.4"/><path d="M12.2 4.3 L15.6 7 L12.2 9.7Z" fill="#10b890"/></svg>
<div class="tx" style="left:1595.1px;top:1244.0px;font-size:14px;line-height:14px;color:#e6e6e6;">Count</div>
<div class="tb" style="left:1638.6px;top:1244.2px;width:20px;height:19px;line-height:17px">0</div>
<svg class="ab" style="left:1573.1px;top:1279.1px" width="18" height="14" viewBox="0 0 18 14"><circle cx="6.3" cy="7" r="5.1" fill="#141414" stroke="#10b890" stroke-width="2.4"/><path d="M12.2 4.3 L15.6 7 L12.2 9.7Z" fill="#10b890"/></svg>
<div class="tx" style="left:1595.1px;top:1278.0px;font-size:14px;line-height:14px;color:#e6e6e6;">Index</div>
<div class="tb" style="left:1633.6px;top:1278.2px;width:25px;height:19px;line-height:17px">-1</div>
<svg class="ab" style="left:1573.1px;top:1310.5px" width="18" height="14" viewBox="0 0 18 14"><circle cx="6.3" cy="7" r="5.1" fill="#141414" stroke="#10a0e8" stroke-width="2.4"/><path d="M12.2 4.3 L15.6 7 L12.2 9.7Z" fill="#10a0e8"/></svg>
<div class="tx" style="left:1595.1px;top:1310.0px;font-size:14px;line-height:14px;color:#e6e6e6;">Inventory</div>
<div class="nd setn" style="left:2421.1px;top:557.0px;width:205.4px;height:90.6px"><div class="bd sbd"><div class="hd hsetr" style="left:0;right:0"></div></div></div>
<div class="tx" style="left:2523.8px;top:570.9px;font-size:13px;line-height:13px;font-weight:700;text-shadow:1px 1px 1px rgba(0,0,0,.55);color:#f0f0f0;transform:translateX(-50%);">SET</div>
<svg class="ab" style="left:2440.5px;top:579.8px" width="15" height="16" viewBox="0 0 15 16"><path d="M1 0.5 L7 0.5 L14 8 L7 15.5 L1 15.5 Q0.5 15.5 0.5 15 L0.5 1 Q0.5 0.5 1 0.5Z" fill="#f4f4f4"/></svg>
<svg class="ab" style="left:2596.0px;top:579.8px" width="15" height="16" viewBox="0 0 15 16"><path d="M1 0.5 L7 0.5 L14 8 L7 15.5 L1 15.5 Q0.5 15.5 0.5 15 L0.5 1 Q0.5 0.5 1 0.5Z" fill="#f4f4f4"/></svg>
<svg class="ab" style="left:2440.0px;top:613.0px" width="18" height="14" viewBox="0 0 18 14"><circle cx="6.3" cy="7" r="5.1" fill="#141414" stroke="#9a0000" stroke-width="2.4"/><path d="M12.2 4.3 L15.6 7 L12.2 9.7Z" fill="#9a0000"/></svg>
<div class="tx" style="left:2462.0px;top:611.6px;font-size:14px;line-height:14px;color:#e6e6e6;">Equipping</div>
<svg class="ab" style="left:2532.0px;top:611.7px" width="18.6" height="18.6" viewBox="0 0 17 17"><rect x="0.3" y="0.3" width="16.4" height="16.4" rx="2.5" fill="#b4b4b4"/><rect x="2.6" y="2.6" width="11.8" height="11.8" rx="0.5" fill="#5c5c5c"/><path d="M3.8 8.6 L7.2 12.4 L14.5 4.2" stroke="#cfcfcf" stroke-width="2.6" fill="none"/></svg>
<svg class="ab" style="left:2592.0px;top:611.0px" width="18" height="14" viewBox="0 0 18 14"><circle cx="6.3" cy="7" r="5.1" fill="#141414" stroke="#9a0000" stroke-width="2.4"/><path d="M12.2 4.3 L15.6 7 L12.2 9.7Z" fill="#9a0000"/></svg>
<div class="nd " style="left:2781.4px;top:503.6px;width:325.8px;height:138.3px"><div class="bd"><div class="hd hfn" style="height:60.2px"></div></div></div>
<svg class="ab" style="left:2795.9px;top:512.8px" width="17" height="17" viewBox="0 0 17 17"><path d="M8.5 1.5 L15.5 8.5 L8.5 15.5 L1.5 8.5Z" fill="none" stroke="#f0f0f0" stroke-width="2.7" stroke-linejoin="round"/></svg>
<div class="tx" style="left:2818.9px;top:514.1px;font-size:13.6px;line-height:13.6px;font-weight:700;text-shadow:1px 1px 1px rgba(0,0,0,.55);color:#f4f4f4;letter-spacing:0.05px">Multicast Unequip</div>
<div class="tx" style="left:2818.7px;top:536.0px;font-size:13.7px;line-height:13.7px;font-style:italic;color:#a9ad8e;letter-spacing:0">Target is BP Player Inventory Component</div>
<div class="tx" style="left:2818.7px;top:551.0px;font-size:13.7px;line-height:13.7px;font-style:italic;color:#a9ad8e;letter-spacing:-0.16px">RELIABLE Replicated To All (if server)</div>
<svg class="ab" style="left:2797.0px;top:578.6px" width="15" height="16" viewBox="0 0 15 16"><path d="M1 0.5 L7 0.5 L14 8 L7 15.5 L1 15.5 Q0.5 15.5 0.5 15 L0.5 1 Q0.5 0.5 1 0.5Z" fill="#f4f4f4"/></svg>
<svg class="ab" style="left:3077.0px;top:578.6px" width="15" height="16" viewBox="0 0 15 16"><path d="M1 0.5 L7 0.5 L14 8 L7 15.5 L1 15.5 Q0.5 15.5 0.5 15 L0.5 1 Q0.5 0.5 1 0.5Z" fill="#f4f4f4"/></svg>
<svg class="ab" style="left:2797.0px;top:612.5px" width="18" height="14" viewBox="0 0 18 14"><circle cx="6.3" cy="7" r="5.1" fill="#141414" stroke="#10a0e8" stroke-width="2.4"/><path d="M12.2 4.3 L15.6 7 L12.2 9.7Z" fill="#10a0e8"/></svg>
<div class="tx" style="left:2820.0px;top:610.6px;font-size:14px;line-height:14px;color:#e6e6e6;">Target</div>
<div class="tb" style="left:2866.0px;top:610.2px;width:34px;height:19px;line-height:17px">self</div>
<div class="nd " style="left:3213.4px;top:503.7px;width:371.0px;height:174.0px"><div class="bd"><div class="hd hfn" style="height:60.2px"></div></div></div>
<svg class="ab" style="left:3227.9px;top:512.9px" width="17" height="17" viewBox="0 0 17 17"><path d="M8.5 1.5 L15.5 8.5 L8.5 15.5 L1.5 8.5Z" fill="none" stroke="#f0f0f0" stroke-width="2.7" stroke-linejoin="round"/></svg>
<div class="tx" style="left:3250.9px;top:514.2px;font-size:13.6px;line-height:13.6px;font-weight:700;text-shadow:1px 1px 1px rgba(0,0,0,.55);color:#f4f4f4;letter-spacing:-0.2px">Client Exit Aimed</div>
<div class="tx" style="left:3250.7px;top:536.1px;font-size:13.7px;line-height:13.7px;font-style:italic;color:#a9ad8e;letter-spacing:0">Target is BP Player Inventory Component</div>
<div class="tx" style="left:3250.7px;top:551.1px;font-size:13.7px;line-height:13.7px;font-style:italic;color:#a9ad8e;letter-spacing:-0.16px">RELIABLE Replicated To Owning Client (if server)</div>
<svg class="ab" style="left:3229.4px;top:578.5px" width="15" height="16" viewBox="0 0 15 16"><path d="M1 0.5 L7 0.5 L14 8 L7 15.5 L1 15.5 Q0.5 15.5 0.5 15 L0.5 1 Q0.5 0.5 1 0.5Z" fill="#f4f4f4"/></svg>
<svg class="ab" style="left:3553.4px;top:578.5px" width="15" height="16" viewBox="0 0 15 16"><path d="M1 0.5 L7 0.5 L14 8 L7 15.5 L1 15.5 Q0.5 15.5 0.5 15 L0.5 1 Q0.5 0.5 1 0.5Z" fill="#f4f4f4"/></svg>
<svg class="ab" style="left:3229.4px;top:613.3px" width="18" height="14" viewBox="0 0 18 14"><circle cx="6.3" cy="7" r="5.1" fill="#141414" stroke="#10a0e8" stroke-width="2.4"/><path d="M12.2 4.3 L15.6 7 L12.2 9.7Z" fill="#10a0e8"/></svg>
<div class="tx" style="left:3252.9px;top:610.8px;font-size:14px;line-height:14px;color:#e6e6e6;">Target</div>
<div class="tb" style="left:3298.9px;top:609.9px;width:34px;height:19px;line-height:17px">self</div>
<svg class="ab" style="left:3229.4px;top:647.3px" width="18" height="14" viewBox="0 0 18 14"><circle cx="6.3" cy="7" r="5.1" fill="#141414" stroke="#9a0000" stroke-width="2.4"/><path d="M12.2 4.3 L15.6 7 L12.2 9.7Z" fill="#9a0000"/></svg>
<div class="tx" style="left:3252.9px;top:644.3px;font-size:14px;line-height:14px;color:#e6e6e6;">Force Exit</div>
<svg class="ab" style="left:3320.4px;top:645.4px" width="18.6" height="18.6" viewBox="0 0 17 17"><rect x="0.3" y="0.3" width="16.4" height="16.4" rx="2.5" fill="#b4b4b4"/><rect x="2.6" y="2.6" width="11.8" height="11.8" rx="0.5" fill="#5c5c5c"/><path d="M3.8 8.6 L7.2 12.4 L14.5 4.2" stroke="#cfcfcf" stroke-width="2.6" fill="none"/></svg>
<div class="nd " style="left:2331.5px;top:881.5px;width:371.0px;height:174.0px"><div class="bd"><div class="hd hfn" style="height:60.2px"></div></div></div>
<svg class="ab" style="left:2346.0px;top:890.7px" width="17" height="17" viewBox="0 0 17 17"><path d="M8.5 1.5 L15.5 8.5 L8.5 15.5 L1.5 8.5Z" fill="none" stroke="#f0f0f0" stroke-width="2.7" stroke-linejoin="round"/></svg>
<div class="tx" style="left:2369.0px;top:892.0px;font-size:13.6px;line-height:13.6px;font-weight:700;text-shadow:1px 1px 1px rgba(0,0,0,.55);color:#f4f4f4;letter-spacing:-0.2px">Client Exit Aimed</div>
<div class="tx" style="left:2368.8px;top:913.9px;font-size:13.7px;line-height:13.7px;font-style:italic;color:#a9ad8e;letter-spacing:0">Target is BP Player Inventory Component</div>
<div class="tx" style="left:2368.8px;top:928.9px;font-size:13.7px;line-height:13.7px;font-style:italic;color:#a9ad8e;letter-spacing:-0.16px">RELIABLE Replicated To Owning Client (if server)</div>
<svg class="ab" style="left:2347.5px;top:956.3px" width="15" height="16" viewBox="0 0 15 16"><path d="M1 0.5 L7 0.5 L14 8 L7 15.5 L1 15.5 Q0.5 15.5 0.5 15 L0.5 1 Q0.5 0.5 1 0.5Z" fill="#f4f4f4"/></svg>
<svg class="ab" style="left:2671.5px;top:956.3px" width="15" height="16" viewBox="0 0 15 16"><path d="M1 0.5 L7 0.5 L14 8 L7 15.5 L1 15.5 Q0.5 15.5 0.5 15 L0.5 1 Q0.5 0.5 1 0.5Z" fill="#f4f4f4"/></svg>
<svg class="ab" style="left:2347.5px;top:991.1px" width="18" height="14" viewBox="0 0 18 14"><circle cx="6.3" cy="7" r="5.1" fill="#141414" stroke="#10a0e8" stroke-width="2.4"/><path d="M12.2 4.3 L15.6 7 L12.2 9.7Z" fill="#10a0e8"/></svg>
<div class="tx" style="left:2371.0px;top:988.6px;font-size:14px;line-height:14px;color:#e6e6e6;">Target</div>
<div class="tb" style="left:2417.0px;top:987.7px;width:34px;height:19px;line-height:17px">self</div>
<svg class="ab" style="left:2347.5px;top:1025.1px" width="18" height="14" viewBox="0 0 18 14"><circle cx="6.3" cy="7" r="5.1" fill="#141414" stroke="#9a0000" stroke-width="2.4"/><path d="M12.2 4.3 L15.6 7 L12.2 9.7Z" fill="#9a0000"/></svg>
<div class="tx" style="left:2371.0px;top:1022.1px;font-size:14px;line-height:14px;color:#e6e6e6;">Force Exit</div>
<svg class="ab" style="left:2438.5px;top:1023.2px" width="18.6" height="18.6" viewBox="0 0 17 17"><rect x="0.3" y="0.3" width="16.4" height="16.4" rx="2.5" fill="#b4b4b4"/><rect x="2.6" y="2.6" width="11.8" height="11.8" rx="0.5" fill="#5c5c5c"/><path d="M3.8 8.6 L7.2 12.4 L14.5 4.2" stroke="#cfcfcf" stroke-width="2.6" fill="none"/></svg>
<div class="nd " style="left:2781.2px;top:881.5px;width:368.6px;height:138.6px"><div class="bd"><div class="hd hfn" style="height:60.2px"></div></div></div>
<svg class="ab" style="left:2795.7px;top:890.7px" width="17" height="17" viewBox="0 0 17 17"><path d="M8.5 1.5 L15.5 8.5 L8.5 15.5 L1.5 8.5Z" fill="none" stroke="#f0f0f0" stroke-width="2.7" stroke-linejoin="round"/></svg>
<div class="tx" style="left:2818.7px;top:892.0px;font-size:13.6px;line-height:13.6px;font-weight:700;text-shadow:1px 1px 1px rgba(0,0,0,.55);color:#f4f4f4;letter-spacing:0.27px">Server Destroy Held Item</div>
<div class="tx" style="left:2818.5px;top:913.9px;font-size:13.7px;line-height:13.7px;font-style:italic;color:#a9ad8e;letter-spacing:0">Target is BP Player Inventory Component</div>
<div class="tx" style="left:2818.5px;top:928.9px;font-size:13.7px;line-height:13.7px;font-style:italic;color:#a9ad8e;letter-spacing:-0.16px">RELIABLE Replicated To Server (if owning client)</div>
<svg class="ab" style="left:2797.0px;top:956.8px" width="15" height="16" viewBox="0 0 15 16"><path d="M1 0.5 L7 0.5 L14 8 L7 15.5 L1 15.5 Q0.5 15.5 0.5 15 L0.5 1 Q0.5 0.5 1 0.5Z" fill="#f4f4f4"/></svg>
<svg class="ab" style="left:3119.0px;top:956.8px" width="15" height="16" viewBox="0 0 15 16"><path d="M1 0.5 L7 0.5 L14 8 L7 15.5 L1 15.5 Q0.5 15.5 0.5 15 L0.5 1 Q0.5 0.5 1 0.5Z" fill="#f4f4f4"/></svg>
<svg class="ab" style="left:2797.0px;top:990.5px" width="18" height="14" viewBox="0 0 18 14"><circle cx="6.3" cy="7" r="5.1" fill="#141414" stroke="#10a0e8" stroke-width="2.4"/><path d="M12.2 4.3 L15.6 7 L12.2 9.7Z" fill="#10a0e8"/></svg>
<div class="tx" style="left:2820.0px;top:989.1px;font-size:14px;line-height:14px;color:#e6e6e6;">Target</div>
<div class="tb" style="left:2866.0px;top:988.2px;width:34px;height:19px;line-height:17px">self</div>
<div class="nd setn" style="left:3590.9px;top:936.1px;width:173.1px;height:81.1px"><div class="bd sbd"><div class="hd hset" style="left:0;right:0"></div></div></div>
<div class="tx" style="left:3677.5px;top:950.0px;font-size:13px;line-height:13px;font-weight:700;text-shadow:1px 1px 1px rgba(0,0,0,.55);color:#f0f0f0;transform:translateX(-50%);">SET</div>
<svg class="ab" style="left:3610.5px;top:958.3px" width="15" height="16" viewBox="0 0 15 16"><path d="M1 0.5 L7 0.5 L14 8 L7 15.5 L1 15.5 Q0.5 15.5 0.5 15 L0.5 1 Q0.5 0.5 1 0.5Z" fill="#f4f4f4"/></svg>
<svg class="ab" style="left:3733.0px;top:958.3px" width="15" height="16" viewBox="0 0 15 16"><path d="M1.5 1.5 L6.8 1.5 L12.6 8 L6.8 14.5 L1.5 14.5Z" fill="none" stroke="#e8e8e8" stroke-width="1.6" stroke-linejoin="round"/></svg>
<svg class="ab" style="left:3609.0px;top:989.2px" width="18" height="14" viewBox="0 0 18 14"><circle cx="6.3" cy="7" r="6.2" fill="#0058d0"/><path d="M12.2 4.5 L16 7 L12.2 9.5Z" fill="#0058d0"/></svg>
<div class="tx" style="left:3632.0px;top:989.1px;font-size:14px;line-height:14px;color:#e6e6e6;">Used Item</div>
<svg class="ab" style="left:3728.0px;top:989.2px" width="18" height="14" viewBox="0 0 18 14"><circle cx="6.3" cy="7" r="5.1" fill="#141414" stroke="#0058d0" stroke-width="2.4"/><path d="M12.2 4.3 L15.6 7 L12.2 9.7Z" fill="#0058d0"/></svg>
<div class="nd " style="left:3304.0px;top:1008.1px;width:264.7px;height:168.0px"><div class="bd"><div class="hd hst" style="height:23.9px"></div></div></div>
<svg class="ab" style="left:3317.5px;top:1015.6px" width="18" height="20" viewBox="0 0 18 20"><rect x="5" y="7.7" width="11.8" height="4.4" rx="2.2" fill="#6aa0f0"/><path d="M6 6.5 L2 1.8" stroke="#f0f0f0" stroke-width="1.8"/><path d="M0.6 0.4 L4.6 0.6 L1 4.2Z" fill="#f0f0f0"/><path d="M6 13 L2 17.5" stroke="#f0f0f0" stroke-width="1.8"/><path d="M0.6 19 L4.6 18.8 L1 15.2Z" fill="#f0f0f0"/></svg>
<div class="tx" style="left:3340.0px;top:1015.7px;font-size:14px;line-height:14px;font-weight:700;text-shadow:1px 1px 1px rgba(0,0,0,.55);color:#f4f4f4;letter-spacing:0.1px">Make S_ItemInventory</div>
<svg class="ab" style="left:3319.0px;top:1048.0px" width="18" height="14" viewBox="0 0 18 14"><circle cx="6.3" cy="7" r="5.1" fill="#141414" stroke="#d020c0" stroke-width="2.4"/><path d="M12.2 4.3 L15.6 7 L12.2 9.7Z" fill="#d020c0"/></svg>
<div class="tx" style="left:3341.0px;top:1047.2px;font-size:14px;line-height:14px;color:#e6e6e6;">ID</div>
<div class="tb" style="left:3360.0px;top:1047.6px;width:20px;height:20px"></div>
<div class="tx" style="left:3531.0px;top:1047.2px;font-size:14px;line-height:14px;color:#e6e6e6;transform:translateX(-100%);">S Item Inventory</div>
<svg class="ab" style="left:3538.0px;top:1048.0px" width="18" height="14" viewBox="0 0 18 14"><circle cx="6.3" cy="7" r="6.2" fill="#0058d0"/><path d="M12.2 4.5 L16 7 L12.2 9.5Z" fill="#0058d0"/></svg>
<svg class="ab" style="left:3319.0px;top:1082.7px" width="18" height="14" viewBox="0 0 18 14"><circle cx="6.3" cy="7" r="5.1" fill="#141414" stroke="#10b890" stroke-width="2.4"/><path d="M12.2 4.3 L15.6 7 L12.2 9.7Z" fill="#10b890"/></svg>
<div class="tx" style="left:3341.0px;top:1081.7px;font-size:14px;line-height:14px;color:#e6e6e6;">Count</div>
<div class="tb" style="left:3384.5px;top:1081.9px;width:20px;height:19px;line-height:17px">0</div>
<svg class="ab" style="left:3319.0px;top:1116.8px" width="18" height="14" viewBox="0 0 18 14"><circle cx="6.3" cy="7" r="5.1" fill="#141414" stroke="#10b890" stroke-width="2.4"/><path d="M12.2 4.3 L15.6 7 L12.2 9.7Z" fill="#10b890"/></svg>
<div class="tx" style="left:3341.0px;top:1115.7px;font-size:14px;line-height:14px;color:#e6e6e6;">Index</div>
<div class="tb" style="left:3379.5px;top:1115.9px;width:25px;height:19px;line-height:17px">-1</div>
<svg class="ab" style="left:3319.0px;top:1148.2px" width="18" height="14" viewBox="0 0 18 14"><circle cx="6.3" cy="7" r="5.1" fill="#141414" stroke="#10a0e8" stroke-width="2.4"/><path d="M12.2 4.3 L15.6 7 L12.2 9.7Z" fill="#10a0e8"/></svg>
<div class="tx" style="left:3341.0px;top:1147.7px;font-size:14px;line-height:14px;color:#e6e6e6;">Inventory</div>
<div style="position:absolute;left:3640px;top:0;width:153px;height:1648px;background:linear-gradient(to right,rgba(0,0,0,0),rgba(0,0,0,.22))"></div>
<div style="position:absolute;left:0;top:0;width:60px;height:1648px;background:linear-gradient(to right,rgba(0,0,0,.17),rgba(0,0,0,0))"></div>
<div id="top"></div>
<svg class="ab" style="left:0;top:0" width="120" height="59" viewBox="0 0 120 59"><defs><linearGradient id="ag" x1="0" y1="0" x2="0" y2="1"><stop offset="0" stop-color="#b4b4b4"/><stop offset="1" stop-color="#8c8c8c"/></linearGradient></defs><path d="M15.2 26.8 L30.2 8.9 L30.2 19.2 L39.3 19.2 L39.3 33.5 L30.2 33.5 L30.2 43.3Z" fill="url(#ag)"/><path d="M104.1 26.8 L89.1 8.9 L89.1 19.2 L78.2 19.2 L78.2 33.5 L89.1 33.5 L89.1 43.3Z" fill="url(#ag)"/></svg>
<svg class="ab" style="left:1590px;top:0" width="70" height="60" viewBox="0 0 70 60"><defs><linearGradient id="fg" x1="0" y1="0" x2="0" y2="1"><stop offset="0" stop-color="#f6f8ff"/><stop offset="1" stop-color="#8596d0"/></linearGradient></defs><path d="M44.8 12.8 C39 10.4 34.6 12.8 33.4 20 L29.6 39 C28.4 44.5 24 46.8 17.6 44.6" stroke="url(#fg)" stroke-width="4.6" fill="none" stroke-linecap="round"/><circle cx="44.2" cy="13.6" r="2.6" fill="#eef1ff"/><circle cx="18.4" cy="43.6" r="2.6" fill="#8a9ad4"/><path d="M25.6 23.3 L37.6 23.3" stroke="#e4e8fb" stroke-width="3"/></svg>
<div class="tx" style="left:1661.0px;top:14.0px;font-size:29px;line-height:29px;color:#9a9a9a;letter-spacing:0">BP_PlayerInventoryComponent</div>
<svg class="ab" style="left:2078px;top:17px" width="16" height="24" viewBox="0 0 16 24"><path d="M3 2 L13 12 L3 22" stroke="#d0d0d0" stroke-width="3" fill="none"/></svg>
<div class="tx" style="left:2108.0px;top:14.0px;font-size:29px;line-height:29px;color:#9a9a9a;letter-spacing:0">Clear Holdable</div>
<div class="tx" style="left:3677.0px;top:8.8px;font-size:31px;line-height:31px;font-weight:700;color:#2e2e2e;transform:scaleX(0.86);transform-origin:0 0;">Zoom -2</div>
<div style="position:absolute;left:3790px;top:0;width:3px;height:1648px;background:#666"></div>
</body></html>
